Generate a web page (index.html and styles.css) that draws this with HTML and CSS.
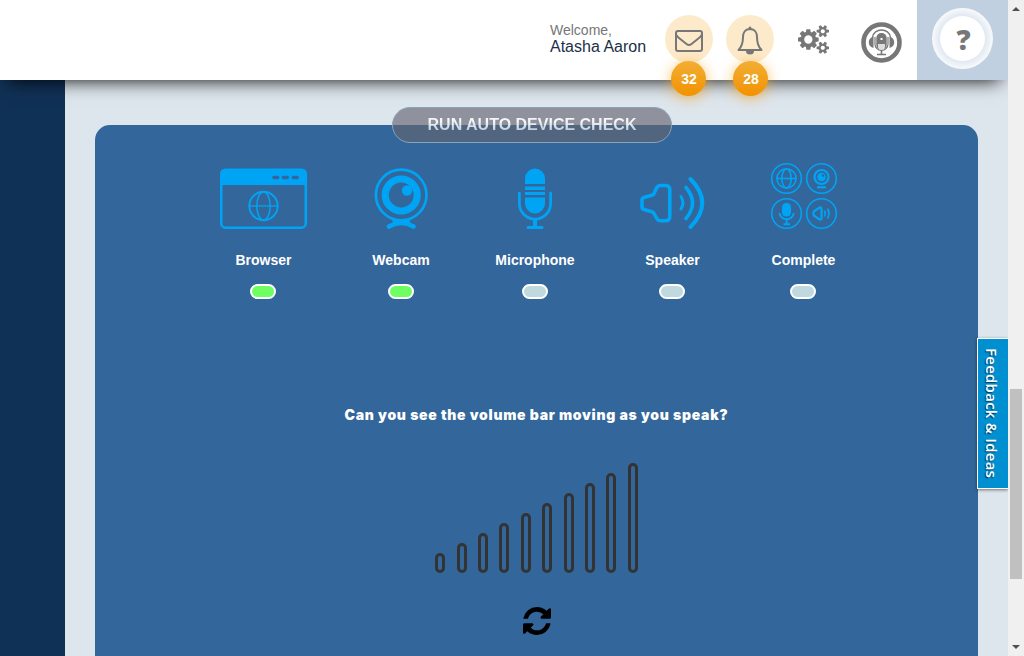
FILE: index.html
```html
<!DOCTYPE html>
<html lang="en">
<head>
<meta charset="utf-8">
<title>Device check</title>
<link rel="stylesheet" href="styles.css">
</head>
<body>
<div class="app">
  <div class="page">
    <header class="header">
      <div class="welcome"><span class="hello">Welcome,</span><span class="name">Atasha Aaron</span></div>
      <a class="notify">
        <svg width="30" height="24" viewBox="0 0 30 24" fill="none" stroke="#777" stroke-width="2"><rect x="2" y="2" width="26" height="20" rx="2"/><path d="M2 5.500Q3 7.500 5 9L12.500 15Q15 17 17.500 15L25 9Q27 7.500 28 5.500"/></svg>
        <span class="badge">32</span>
      </a>
      <a class="notify">
        <svg width="28" height="30" viewBox="0 0 28 30" fill="none" stroke="#777" stroke-width="2"><path d="M14 3C9 3 7 7 7 11C7 18 5.500 21 2.500 24H25.500C22.500 21 21 18 21 11C21 7 19 3 14 3Z" stroke-linejoin="round"/><path d="M14 1.600V3" stroke-width="2.400" stroke-linecap="round"/><path d="M10 25H18A4 3.500 0 0 1 10 25Z" fill="#777" stroke="none"/></svg>
        <span class="badge right">28</span>
      </a>
      <svg class="cogs" viewBox="-64 0 1920 1792" fill="#777"><path d="M832 896q0-106-75-181t-181-75-181 75-75 181 75 181 181 75 181-75 75-181zm768 512q0-52-38-90t-90-38-90 38-38 90q0 53 37.500 90.500t90.500 37.500 90.500-37.500 37.500-90.500zm0-1024q0-52-38-90t-90-38-90 38-38 90q0 53 37.500 90.500t90.500 37.500 90.500-37.500 37.500-90.500zm-384 421v185q0 10-7 19.500t-16 10.500l-155 24q-11 35-32 76 34 48 90 115 7 11 7 20 0 12-7 19-23 30-82.500 89.500t-78.500 59.500q-11 0-21-7l-115-90q-37 19-77 31-11 108-23 155-7 24-30 24h-186q-11 0-20-7.500t-10-17.500l-23-153q-34-10-75-31l-118 89q-7 7-20 7-11 0-21-8-144-133-144-160 0-9 7-19 10-14 41-53t47-61q-23-44-35-82l-152-24q-10-1-17-9.500t-7-19.500v-185q0-10 7-19.500t16-10.500l155-24q11-35 32-76-34-48-90-115-7-11-7-20 0-12 7-20 22-30 82-89t79-59q11 0 21 7l115 90q34-18 77-32 11-108 23-154 7-24 30-24h186q11 0 20 7.500t10 17.500l23 153q34 10 75 31l118-89q8-7 20-7 11 0 21 8 144 133 144 160 0 8-7 19-12 16-42 54t-45 60q23 48 34 82l152 23q10 2 17 10.500t7 19.500zm640 533v140q0 16-149 31-12 27-30 52 51 113 51 138 0 4-4 7-122 71-124 71-8 0-46-47t-52-68q-20 2-30 2t-30-2q-14 21-52 68t-46 47q-2 0-124-71-4-3-4-7 0-25 51-138-18-25-30-52-149-15-149-31v-140q0-16 149-31 13-29 30-52-51-113-51-138 0-4 4-7 4-2 35-20t59-34 30-16q8 0 46 46.500t52 67.500q20-2 30-2t30 2q51-71 92-112l6-2q4 0 124 70 4 3 4 7 0 25-51 138 17 23 30 52 149 15 149 31zm0-1024v140q0 16-149 31-12 27-30 52 51 113 51 138 0 4-4 7-122 71-124 71-8 0-46-47t-52-68q-20 2-30 2t-30-2q-14 21-52 68t-46 47q-2 0-124-71-4-3-4-7 0-25 51-138-18-25-30-52-149-15-149-31v-140q0-16 149-31 13-29 30-52-51-113-51-138 0-4 4-7 4-2 35-20t59-34 30-16q8 0 46 46.500t52 67.500q20-2 30-2t30 2q51-71 92-112l6-2q4 0 124 70 4 3 4 7 0 25-51 138 17 23 30 52 149 15 149 31z"/></svg>
      <svg class="headset" viewBox="0 0 41 41" fill="none" stroke="#777"><circle cx="20.500" cy="20.500" r="18" stroke-width="4.600"/><path d="M11.500 15.500C12.500 5.500 28.500 5.500 29.500 15.500" stroke-width="1.300"/><path d="M12.500 14.500V26C9 25 7.800 23 7.800 20.500S9 15.500 12.500 14.500ZM28.500 14.500V26C32 25 33.200 23 33.200 20.500S32 15.500 28.500 14.500Z" fill="#777" stroke="none"/><path d="M14 15V22A6.500 6.500 0 0 0 27 22V15" stroke-width="1.200"/><rect x="15.300" y="11" width="10.400" height="17" rx="5" fill="#777" stroke="none"/><path d="M17 22H24V24.500A3 3 0 0 1 17 24.500Z" fill="#ddd" stroke="none"/><rect x="19.500" y="16" width="2" height="2" fill="#fff" stroke="none"/><path d="M20.500 28.500V32M16 32.500H25" stroke-width="1.600"/></svg>
      <div class="help"><div class="help-ring"><span class="help-disc">?</span></div></div>
    </header>
    <div class="body">
      <nav class="sidebar"></nav>
      <main class="content">
        <section class="panel">
          <button class="run">RUN AUTO DEVICE CHECK</button>
          <div class="steps">
            <div class="step"><svg width="88" height="68" viewBox="219.500 162 88 68" fill="none" stroke="#00a4f4"><rect x="220.700" y="169.700" width="84.600" height="58" rx="4.500" stroke-width="2.600"/><path d="M220 185V174Q220 169 225 169H301Q306 169 306 174V185Z" fill="#00a4f4" stroke="none"/><path d="M273.500 177.500H277M283 177.500H286.700M293 177.500H296.500" stroke="#33669a" stroke-width="3.600" stroke-linecap="round"/><circle cx="263" cy="206" r="14.200" stroke-width="1.900"/><ellipse cx="263" cy="206" rx="6.700" ry="14" stroke-width="1.500"/><path d="M249 206H277" stroke-width="1.300"/></svg><b>Browser</b><i class="light on"></i></div>
            <div class="step"><svg width="56" height="68" viewBox="373 162 56 68" fill="none" stroke="#00a4f4"><circle cx="401.200" cy="195" r="25.300" stroke-width="2.700"/><circle cx="401.200" cy="195" r="16" stroke-width="7.200"/><circle cx="407" cy="190.500" r="5.200" fill="#00a4f4" stroke="none"/><path d="M389 226.500Q401.300 219.500 413.500 226.500" stroke-width="4.600" stroke-linecap="round"/><path d="M392 219Q401.300 222.500 410 219L410 223H393Z" fill="#00a4f4" stroke="none"/></svg><b>Webcam</b><i class="light on"></i></div>
            <div class="step"><svg width="36" height="68" viewBox="517 162 36 68" fill="none" stroke="#00a4f4"><path d="M525 184V178.500A10 10 0 0 1 545 178.500V184ZM525 186.500H545V190H525ZM525 192H545V195H525ZM525 197.500H545V203.500A10 10 0 0 1 525 203.500Z" fill="#00a4f4" stroke="none"/><path d="M519.400 193V203.500A15.600 15.600 0 0 0 550.600 203.500V193" stroke-width="2.700" stroke-linecap="round"/><path d="M535 219V227" stroke-width="4"/><path d="M528 227.500H542" stroke-width="3" stroke-linecap="round"/></svg><b>Microphone</b><i class="light"></i></div>
            <div class="step"><svg width="68" height="68" viewBox="638.500 162 68 68" fill="none" stroke="#00a4f4" stroke-linecap="round" stroke-linejoin="round"><path d="M641.500 199.500Q641.700 198 643.500 197.500L652 195Q653 194.700 653.500 193.500L656 188Q657.500 185.500 660 185.500H665Q669.300 185.500 669.300 190V216Q669.300 220.800 665 220.800H660Q657.500 220.800 656 218L653.500 213.500Q653 212.300 652 212L643.500 209.500Q641.700 209 641.500 207Z" stroke-width="3.600"/><path d="M680.500 196.500Q684.500 203 680.500 209" stroke-width="3"/><path d="M685.500 187.500Q698.500 203 685.500 218.500" stroke-width="3.600"/><path d="M690 179Q713.500 203 690 227" stroke-width="4"/></svg><b>Speaker</b><i class="light"></i></div>
            <div class="step"><svg width="68" height="68" viewBox="770 162 68 68" fill="none" stroke="#00a4f4"><g stroke-width="1.600"><circle cx="786.500" cy="178.500" r="14.800"/><circle cx="821.500" cy="178.500" r="14.800"/><circle cx="786.500" cy="213.500" r="14.800"/><circle cx="821.500" cy="213.500" r="14.800"/><circle cx="786.500" cy="178.500" r="9.600"/><ellipse cx="786.500" cy="178.500" rx="4.700" ry="9.500"/><path d="M777 178.500H796"/></g><circle cx="821.500" cy="177" r="7" stroke-width="2.200"/><circle cx="821.500" cy="177" r="4.300" fill="#00a4f4" stroke="none"/><circle cx="823" cy="175.500" r="1.200" fill="#33669a" stroke="none"/><path d="M817 187.300H826" stroke-width="2.200"/><rect x="782" y="203" width="9" height="13.500" rx="4.200" fill="#00a4f4" stroke="none"/><path d="M779.500 213A7.200 7.200 0 0 0 793.800 213M786.700 219V224M783.500 224.200H790" stroke-width="2"/><path d="M813.800 211.500L819.500 207.500Q821.500 207 821.500 209V218Q821.500 220 819.500 219.500L813.800 215.500Q813 213.500 813.800 211.500Z" stroke-width="2.200"/><path d="M824.500 210.500Q826 213.500 824.500 216.500M827.500 208.500Q830.500 213.500 827.500 218.500" stroke-width="1.700"/></svg><b>Complete</b><i class="light"></i></div>
          </div>
          <p class="question">Can you see the volume bar moving as you speak?</p>
          <div class="volume">
            <span style="height:20px"></span><span style="height:30px"></span><span style="height:40px"></span><span style="height:50px"></span><span style="height:60px"></span><span style="height:70px"></span><span style="height:80px"></span><span style="height:90px"></span><span style="height:100px"></span><span style="height:110px"></span>
          </div>
          <svg class="refresh" viewBox="0 0 1536 1536"><path d="M1511 928q0 5-1 7-64 268-268 434.500t-478 166.500q-146 0-282.500-55t-243.500-157l-129 129q-19 19-45 19t-45-19-19-45v-448q0-26 19-45t45-19h448q26 0 45 19t19 45-19 45l-137 137q71 66 161 102t187 36q134 0 250-65t186-179q11-17 53-117 8-23 30-23h192q13 0 22.500 9.500t9.500 22.500zm25-800v448q0 26-19 45t-45 19h-448q-26 0-45-19t-19-45 19-45l138-138q-148-137-349-137-134 0-250 65t-186 179q-11 17-53 117-8 23-30 23h-199q-13 0-22.500-9.500t-9.500-22.500v-7q65-268 270-434.500t480-166.500q146 0 284 55.500t245 156.500l130-129q19-19 45-19t45 19 19 45z"/></svg>
        </section>
      </main>
    </div>
    <a class="feedback">Feedback &amp; Ideas</a>
  </div>
  <div class="scrollbar">
    <svg width="16" height="17" viewBox="0 0 16 17"><path d="M4 11L8 7L12 11Z" fill="#505050"/></svg>
    <div class="track"><div class="thumb"></div></div>
    <svg width="16" height="17" viewBox="0 0 16 17"><path d="M4 6L8 10L12 6Z" fill="#505050"/></svg>
  </div>
</div>
</body>
</html>
```

FILE: styles.css
```css
* { box-sizing: border-box; }
body { margin: 0; font-family: "Liberation Sans", Arial, sans-serif; }
.app { display: flex; width: 1024px; height: 656px; overflow: hidden; }
.page { position: relative; display: flex; flex-direction: column; width: 1008px; overflow: hidden; }
.header {
  position: relative; z-index: 2; display: flex; align-items: flex-start; flex: none;
  height: 80px; padding-left: 550px; background: #fff; box-shadow: 0 8px 18px -8px #000;
}
.welcome { display: flex; flex-direction: column; width: 115px; padding-top: 22px; white-space: nowrap; }
.hello { font-size: 14px; line-height: 16px; color: #777; }
.name { font-size: 16px; line-height: 17px; color: #1b2f49; }
.notify {
  position: relative; display: flex; align-items: center; justify-content: center; flex: none;
  width: 48px; height: 48px; margin: 15px 13px 0 0; padding-top: 3px; border-radius: 50%; background: #fdeacb;
}
.badge {
  position: absolute; left: 6px; top: 46px; width: 35px; height: 35px; padding-left: 1px; border-radius: 50%;
  background: linear-gradient(#f2ae35, #f39200); box-shadow: 0 2px 14px rgba(250, 165, 20, .65);
  color: #fff; font-size: 14px; font-weight: bold; line-height: 36px; text-align: center;
}
.badge.right { left: 7px; }
.cogs { flex: none; width: 31px; height: 29px; margin: 25px 32px 0 11px; }
.headset { flex: none; width: 41px; height: 41px; margin: 22px 15px 0 0; }
.help { display: flex; justify-content: center; width: 91px; height: 80px; padding-top: 8px; background: #c1d0e1; }
.help-ring {
  display: flex; align-items: center; justify-content: center; width: 61px; height: 61px;
  border-radius: 50%; background: radial-gradient(circle, #dfe7f0 22px, #f7f9fb 30px);
}
.help-disc {
  width: 45px; height: 45px; border-radius: 50%; background: #fff; color: #777;
  font: 800 28px/47px "Open Sans", sans-serif; text-align: center; padding-left: 2px;
}
.body { display: flex; flex: 1; min-height: 0; }
.sidebar { width: 65px; flex: none; background: #103156; }
.content { flex: 1; padding: 45px 30px 0; background: #dee6ed; }
.panel {
  display: flex; flex-direction: column; align-items: center; height: 560px;
  border-radius: 15px; background: #33669a;
}
.run {
  width: 280px; height: 36px; margin: -18px 0 0 -9px; padding: 0; border: 1px solid #8aa3bd; border-radius: 18px;
  background: linear-gradient(#f4f7fa 40%, #b4c7da 70%) text, rgba(100, 102, 112, .65);
  font: bold 16px/32px "Liberation Sans", Arial, sans-serif; color: transparent;
}
.steps { display: grid; grid-template-columns: 137px 138px 130px 145px 117px; margin: 19px 0 0 -16px; }
.step { display: flex; flex-direction: column; align-items: center; color: #fff; font-size: 14px; }
.step b { margin-top: 22px; line-height: 16px; }
.light { width: 26px; height: 15px; margin: 16px 1px 0 0; border: 2px solid #fff; border-radius: 8px; background: #c0d9de; }
.light.on { background: #6fff62; }
.question { margin: 107px 0 0; font: 900 14px/18px Inter, "Liberation Sans", sans-serif; letter-spacing: .7px; color: #fff; }
.volume { display: flex; align-items: flex-end; justify-content: space-between; width: 202.6px; height: 110px; margin-top: 39px; }
.volume span { width: 10px; border: 3px solid #333; border-radius: 5px; }
.refresh { width: 28px; height: 28px; margin-top: 34px; }
.feedback {
  position: absolute; z-index: 1; left: 977px; top: 338px; width: 31px; height: 151px; border: solid #fff; border-width: 1px 0 1px 1px;
  background: #008fd0; box-shadow: 0 1px 3px rgba(0, 0, 0, .5); color: #fff; writing-mode: vertical-rl; padding-right: 2px;
  font: 600 15px/28px "Open Sans", sans-serif; letter-spacing: .25px; text-align: center; text-shadow: 1px 1px 1px rgba(0, 0, 0, .6);
}
.scrollbar { display: flex; flex-direction: column; width: 16px; background: #f0f0f0; }
.track { flex: 1; padding: 372px 2px 0; }
.thumb { width: 12px; height: 190px; background: #c0c0c0; }
```
